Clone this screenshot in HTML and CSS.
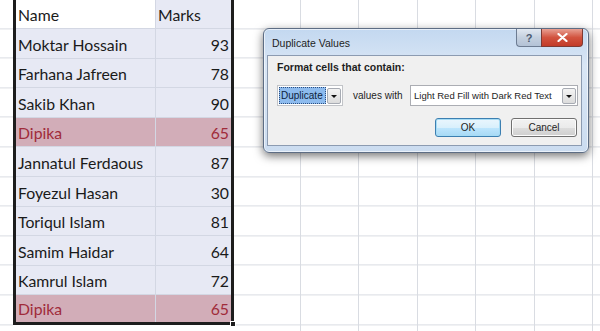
FILE: index.html
```html
<!DOCTYPE html>
<html lang="en">
<head>
  <meta charset="UTF-8">
  <title>Duplicate Values</title>
  <link rel="stylesheet" href="styles.css">
</head>
<body>
  <div class="sheet">
    <div class="gutter"></div>

    <div class="range">
      <div class="cell active">Name</div>
      <div class="cell">Marks</div>
      <div class="cell">Moktar Hossain</div>
      <div class="cell num">93</div>
      <div class="cell">Farhana Jafreen</div>
      <div class="cell num">78</div>
      <div class="cell">Sakib Khan</div>
      <div class="cell num">90</div>
      <div class="cell dup">Dipika</div>
      <div class="cell num dup">65</div>
      <div class="cell">Jannatul Ferdaous</div>
      <div class="cell num">87</div>
      <div class="cell">Foyezul Hasan</div>
      <div class="cell num">30</div>
      <div class="cell">Toriqul Islam</div>
      <div class="cell num">81</div>
      <div class="cell">Samim Haidar</div>
      <div class="cell num">64</div>
      <div class="cell">Kamrul Islam</div>
      <div class="cell num">72</div>
      <div class="cell dup last">Dipika</div>
      <div class="cell num dup last">65</div>
      <span class="fill-handle"></span>
    </div>

    <div class="empty">
      <div class="col-c"></div>
      <div class="cols"></div>
    </div>
  </div>

  <div class="dialog">
    <div class="titlebar">
      <span class="title">Duplicate Values</span>
      <div class="caption-btns">
        <span class="cap help">?</span>
        <span class="cap close">
          <svg width="11" height="9" viewBox="0 0 11 9">
            <path d="M1.5 1 L9.5 8 M9.5 1 L1.5 8" stroke="#fff" stroke-width="2.2" stroke-linecap="round"/>
          </svg>
        </span>
      </div>
    </div>
    <div class="panel">
      <div class="label">Format cells that contain:</div>
      <div class="choose">
        <div class="select small">
          <span class="value picked">Duplicate</span>
          <span class="arrow"></span>
        </div>
        <span class="with">values with</span>
        <div class="select wide">
          <span class="value">Light Red Fill with Dark Red Text</span>
          <span class="arrow"></span>
        </div>
      </div>
      <div class="actions">
        <button class="btn default">OK</button>
        <button class="btn">Cancel</button>
      </div>
    </div>
  </div>
</body>
</html>
```

FILE: styles.css
```css
* {
  box-sizing: border-box;
}

body {
  margin: 0;
  height: 331px;
  overflow: hidden;
  background: #fff;
  font-family: 'Lato', 'Open Sans', sans-serif;
  color: #1a1a1a;
}

/* worksheet */
.sheet {
  display: flex;
  height: 331px;
}

.gutter,
.col-c,
.cols {
  background-image: repeating-linear-gradient(to bottom, transparent 0, transparent 28.6px, #d9dce2 28.6px, #d9dce2 29.6px);
  background-position: 0 -0.6px;
}

.gutter {
  width: 13px;
}

.range {
  position: relative;
  width: 221px;
  height: 325px;
  border: 3px solid #1d1d1d;
  border-top: 0;
  display: grid;
  grid-template-columns: 140px 1fr;
  grid-template-rows: 29px repeat(9, 29.6px) 1fr;
}

.cell {
  display: flex;
  align-items: flex-end;
  padding: 0 2px 4px;
  font-size: 15.8px;
  line-height: 18px;
  background: #e7e9f4;
  border-bottom: 1px solid #d3d7e3;
  white-space: nowrap;
}

.cell:nth-child(odd) {
  border-right: 1px solid #d3d7e3;
}

.cell.active {
  background: #fff;
}

.cell.num {
  justify-content: flex-end;
}

.cell.dup {
  background: #d2adb8;
  color: #a02b3a;
}

.cell.last {
  border-bottom: 0;
}

.fill-handle {
  position: absolute;
  right: -5px;
  bottom: -5px;
  width: 6px;
  height: 6px;
  background: #1d1d1d;
  border: 1px solid #fff;
}

.empty {
  flex: 1;
  display: flex;
}

.col-c {
  width: 67px;
  border-right: 1px solid #d9dce2;
}

.cols {
  flex: 1;
  background-image:
    repeating-linear-gradient(to bottom, transparent 0, transparent 28.6px, #d9dce2 28.6px, #d9dce2 29.6px),
    repeating-linear-gradient(to right, transparent 0, transparent 57.5px, #d9dce2 57.5px, #d9dce2 58.5px);
  background-position: 0 -0.6px, 0 0;
}

/* dialog */
.dialog {
  position: absolute;
  left: 263px;
  top: 28px;
  width: 326px;
  height: 125px;
  display: flex;
  flex-direction: column;
  padding: 0 6px 6px 3px;
  border: 1px solid #5d6d84;
  border-radius: 6px;
  background: linear-gradient(to bottom, #c3d8f0, #d9e6f5 30%, #cbdcf0 100%);
  box-shadow: 0 3px 10px rgba(0, 0, 0, 0.55), inset 0 0 0 1px rgba(255, 255, 255, 0.6);
  font-family: 'Liberation Sans', Arial, sans-serif;
  color: #1e1e1e;
}

.titlebar {
  height: 26px;
  display: flex;
  align-items: flex-start;
}

.title {
  padding: 8px 0 0 5px;
  font-size: 10.5px;
}

.caption-btns {
  margin-left: auto;
  margin-right: -1px;
  display: flex;
}

.cap {
  height: 18px;
  display: flex;
  align-items: center;
  justify-content: center;
  border: 1px solid #6d7c92;
  border-top: 0;
}

.help {
  width: 25px;
  border-radius: 0 0 0 4px;
  border-right: 0;
  background: linear-gradient(to bottom, #e1e8f1, #c4d0df 50%, #b3c2d6);
  color: #4b5a70;
  font-size: 11px;
  font-weight: bold;
}

.close {
  width: 42px;
  border-radius: 0 0 4px 0;
  background: linear-gradient(to bottom, #e8a093, #d2533f 50%, #c23b28);
  border-color: #7e3a33;
}

.panel {
  flex: 1;
  background: #f0f0f0;
  border: 1px solid #8c9bb1;
  padding: 5px 3px 0 9px;
  font-size: 10px;
}

.label {
  font-size: 10.5px;
  font-weight: bold;
  line-height: 13px;
}

.choose {
  margin-top: 11px;
  display: flex;
  align-items: center;
}

.select {
  height: 21px;
  display: flex;
  align-items: center;
  background: #fff;
  border: 1px solid #abadb3;
  padding: 0 1px 0 1px;
}

.select.small {
  width: 66px;
  border-color: #c2c4c8;
}

.select.wide {
  width: 168px;
  margin-left: auto;
  padding-left: 3px;
  font-size: 9.5px;
}

.value {
  flex: 1;
  white-space: nowrap;
}

.value.picked {
  flex: none;
  width: 47px;
  height: 17px;
  line-height: 15px;
  padding-left: 1px;
  background: #8dbbee;
  color: #0c1d3c;
  border: 1px dotted #2d4f80;
}

.arrow {
  margin-left: auto;
  width: 14px;
  height: 16px;
  border: 1px solid #a7abb3;
  border-radius: 2px;
  background: linear-gradient(to bottom, #f4f4f4, #dcdcdc);
  position: relative;
}

.arrow::after {
  content: '';
  position: absolute;
  left: 3px;
  top: 6px;
  border-left: 3px solid transparent;
  border-right: 3px solid transparent;
  border-top: 3px solid #111;
}

.with {
  margin-left: 10px;
}

.actions {
  margin-top: 12px;
  display: flex;
  justify-content: flex-end;
  gap: 10px;
  padding-right: 1px;
}

.btn {
  width: 66px;
  height: 19px;
  padding: 0;
  font-family: inherit;
  font-size: 10px;
  color: #1e1e1e;
  border: 1px solid #707070;
  border-radius: 3px;
  background: linear-gradient(to bottom, #f2f2f2, #ebebeb 50%, #dddddd 51%, #cfcfcf);
  box-shadow: inset 0 0 0 1px #fcfcfc;
}

.btn.default {
  border-color: #3c7fb1;
  box-shadow: inset 0 0 0 1px #a6dcf5;
  background: linear-gradient(to bottom, #eaf6fd, #d9f0fc 50%, #bee6fd 51%, #a7d9f5);
}
```
